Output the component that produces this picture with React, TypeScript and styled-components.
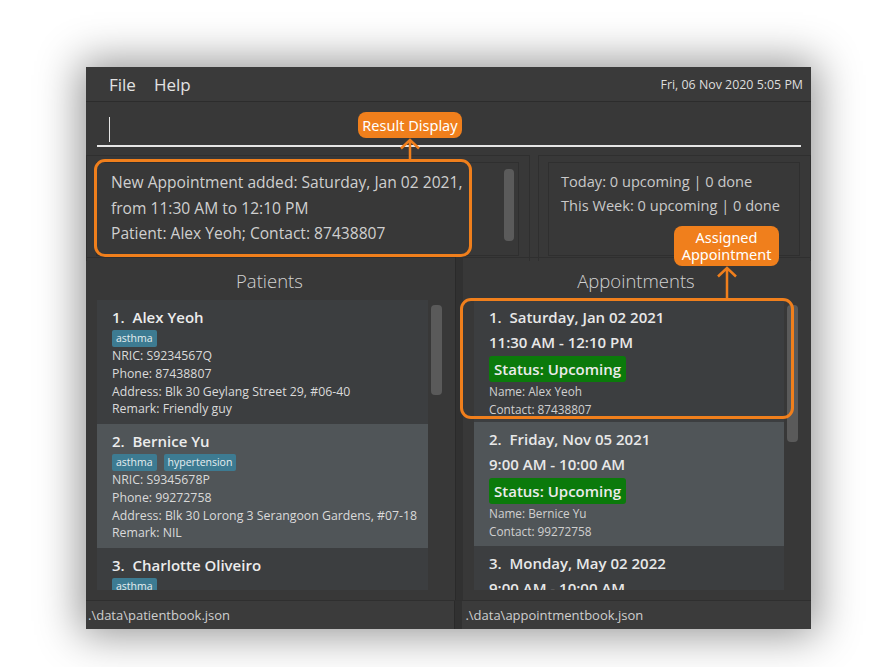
import React from "react";
import styled, { createGlobalStyle } from "styled-components";

const GlobalStyle = createGlobalStyle`
  html, body {
    margin: 0;
    padding: 0;
    background: #ffffff;
  }
  body {
    font-family: "Open Sans", "Noto Sans", sans-serif;
  }
`;

type Patient = {
  name: string;
  tags: string[];
  nric: string;
  phone: string;
  address: string;
  remark: string;
};

type Appointment = {
  date: string;
  time: string;
  name: string;
  contact: string;
};

const patients: Patient[] = [
  {
    name: "Alex Yeoh",
    tags: ["asthma"],
    nric: "S9234567Q",
    phone: "87438807",
    address: "Blk 30 Geylang Street 29, #06-40",
    remark: "Friendly guy",
  },
  {
    name: "Bernice Yu",
    tags: ["asthma", "hypertension"],
    nric: "S9345678P",
    phone: "99272758",
    address: "Blk 30 Lorong 3 Serangoon Gardens, #07-18",
    remark: "NIL",
  },
  {
    name: "Charlotte Oliveiro",
    tags: ["asthma"],
    nric: "S9456789R",
    phone: "93210283",
    address: "Blk 11 Ang Mo Kio Street 74, #11-04",
    remark: "NIL",
  },
];

const appointments: Appointment[] = [
  {
    date: "Saturday, Jan 02 2021",
    time: "11:30 AM - 12:10 PM",
    name: "Alex Yeoh",
    contact: "87438807",
  },
  {
    date: "Friday, Nov 05 2021",
    time: "9:00 AM - 10:00 AM",
    name: "Bernice Yu",
    contact: "99272758",
  },
  {
    date: "Monday, May 02 2022",
    time: "9:00 AM - 10:00 AM",
    name: "Charlotte Oliveiro",
    contact: "93210283",
  },
];

const App = () => {
  return (
    <>
      <GlobalStyle />
      <Page>
        <Window>
          <MenuBar>
            <MenuItem>File</MenuItem>
            <MenuItem>Help</MenuItem>
            <Clock>Fri, 06 Nov 2020 5:05 PM</Clock>
          </MenuBar>

          <CommandRow>
            <CommandInput>
              <Caret />
            </CommandInput>
          </CommandRow>

          <ResultRow>
            <Pane>
              <ResultBox>
                <ResultText>
                  New Appointment added: Saturday, Jan 02 2021,
                  <br />
                  from 11:30 AM to 12:10 PM
                  <br />
                  Patient: Alex Yeoh; Contact: 87438807
                </ResultText>
                <ResultScroll />
              </ResultBox>
            </Pane>
            <Pane>
              <StatsBox>
                <StatLine>Today: 0 upcoming | 0 done</StatLine>
                <StatLine>This Week: 0 upcoming | 0 done</StatLine>
              </StatsBox>
            </Pane>
          </ResultRow>

          <ListsRow>
            <ListPanel $side="left">
              <PanelTitle>Patients</PanelTitle>
              <ListArea>
                <Cards>
                  {patients.map((p, i) => (
                    <PatientCard key={p.name} $alt={i % 2 === 1}>
                      <CardTitle>
                        {i + 1}.&nbsp;&nbsp;{p.name}
                      </CardTitle>
                      <Tags>
                        {p.tags.map((t) => (
                          <Tag key={t}>{t}</Tag>
                        ))}
                      </Tags>
                      <Detail>NRIC: {p.nric}</Detail>
                      <Detail>Phone: {p.phone}</Detail>
                      <Detail>Address: {p.address}</Detail>
                      <Detail>Remark: {p.remark}</Detail>
                    </PatientCard>
                  ))}
                </Cards>
                <ScrollTrack>
                  <ScrollThumb $height={90} />
                </ScrollTrack>
              </ListArea>
            </ListPanel>
            <Divider />
            <ListPanel $side="right">
              <PanelTitle>Appointments</PanelTitle>
              <ListArea>
                <Cards>
                  {appointments.map((a, i) => (
                    <ApptCard key={a.date} $alt={i % 2 === 1}>
                      <ApptLine>
                        {i + 1}.&nbsp;&nbsp;{a.date}
                      </ApptLine>
                      <ApptLine>{a.time}</ApptLine>
                      <Status>Status: Upcoming</Status>
                      <SmallDetail>Name: {a.name}</SmallDetail>
                      <SmallDetail>Contact: {a.contact}</SmallDetail>
                    </ApptCard>
                  ))}
                </Cards>
                <ScrollTrack>
                  <ScrollThumb $height={137} />
                </ScrollTrack>
              </ListArea>
            </ListPanel>
          </ListsRow>

          <StatusRow>
            <StatusCell $side="left">.\data\patientbook.json</StatusCell>
            <Divider />
            <StatusCell $side="right">.\data\appointmentbook.json</StatusCell>
          </StatusRow>

          {/* annotations drawn over the screenshot */}
          <Outline style={{ left: 8, top: 92, width: 372, height: 92 }} />
          <Bubble style={{ left: 272, top: 45, width: 104, height: 26 }}>
            Result Display
          </Bubble>
          <Arrow style={{ left: 314, top: 72 }} width={20} height={22}>
            <path d="M10 1 V22 M1 9.5 L10 1 L19 9.5" />
          </Arrow>

          <Outline style={{ left: 374, top: 231, width: 328, height: 115 }} />
          <Bubble style={{ left: 588, top: 159, width: 105, height: 40 }}>
            Assigned
            <br />
            Appointment
          </Bubble>
          <Arrow style={{ left: 631, top: 200 }} width={20} height={32}>
            <path d="M10 1 V32 M1 9.5 L10 1 L19 9.5" />
          </Arrow>
        </Window>
      </Page>
    </>
  );
};

export default App;

const Page = styled.div`
  width: 896px;
  height: 667px;
  padding: 67px 0 0 86px;
  box-sizing: border-box;
  background: #ffffff;
  overflow: hidden;
`;

const Window = styled.div`
  position: relative;
  width: 725px;
  height: 562px;
  background: #383838;
  display: flex;
  flex-direction: column;
  box-shadow: 0 0 40px 6px rgba(0, 0, 0, 0.42);
  color: #dcdcdc;
`;

const MenuBar = styled.div`
  height: 34px;
  border-bottom: 1px solid #2c2c2c;
  display: flex;
  align-items: center;
  padding: 0 8px 0 23px;
  gap: 18px;
  background: #3a3a3a;
`;

const MenuItem = styled.span`
  font-size: 17px;
  color: #e2e2e2;
`;

const Clock = styled.span`
  margin-left: auto;
  font-size: 12.4px;
  color: #dedede;
`;

const CommandRow = styled.div`
  height: 48px;
  padding: 0 10px 3px 11px;
  box-sizing: border-box;
  display: flex;
  align-items: flex-end;
`;

const CommandInput = styled.div`
  flex: 1;
  height: 34px;
  border-bottom: 2px solid #e6e6e6;
  display: flex;
  align-items: center;
  padding-left: 12px;
  box-sizing: border-box;
`;

const Caret = styled.div`
  width: 1px;
  height: 25px;
  background: #e6e6e6;
`;

const ResultRow = styled.div`
  height: 107px;
  padding-top: 5px;
  box-sizing: border-box;
  display: grid;
  grid-template-columns: 444px 1fr;
  column-gap: 8px;
`;

const Pane = styled.div`
  border: 1px solid #2f2f2f;
  border-bottom: none;
  padding: 6px 10px 5px 9px;
  box-sizing: border-box;
  display: flex;
`;

const ResultBox = styled.div`
  flex: 1;
  border: 1px solid #2f2f2f;
  display: flex;
  justify-content: space-between;
  padding: 6px 4px 8px 14px;
`;

const ResultText = styled.div`
  font-size: 15.6px;
  line-height: 25.5px;
  color: #cfcfcf;
  margin-top: 1px;
`;

const ResultScroll = styled.div`
  width: 10px;
  height: 72px;
  border-radius: 4px;
  background: #5b5b5b;
`;

const StatsBox = styled.div`
  flex: 1;
  border: 1px solid #2f2f2f;
  padding: 6px 10px 8px 12px;
`;

const StatLine = styled.div`
  font-size: 14.6px;
  line-height: 24px;
  color: #c9c9c9;
`;

const ListsRow = styled.div`
  height: 343px;
  display: flex;
`;

const ListPanel = styled.div<{ $side: "left" | "right" }>`
  width: ${(p) => (p.$side === "left" ? "369px" : "348px")};
  border-top: 1px solid #2f2f2f;
  display: flex;
  flex-direction: column;
  padding: 0 13px 10px 11px;
  box-sizing: border-box;
`;

const Divider = styled.div`
  width: 8px;
  background: #313131;
  border-left: 1px solid #2a2a2a;
  box-sizing: border-box;
`;

const PanelTitle = styled.div`
  height: 42px;
  display: flex;
  align-items: center;
  justify-content: center;
  font-size: 18.5px;
  font-weight: 300;
  color: #d2d2d2;
  padding-top: 3px;
  box-sizing: border-box;
`;

const ListArea = styled.div`
  flex: 1;
  display: flex;
  overflow: hidden;
  gap: 3px;
`;

const Cards = styled.div`
  flex: 1;
  overflow: hidden;
  display: flex;
  flex-direction: column;
`;

const PatientCard = styled.div<{ $alt: boolean }>`
  flex-shrink: 0;
  height: 124px;
  box-sizing: border-box;
  padding: 7px 8px 4px 15px;
  background: ${(p) => (p.$alt ? "#505558" : "#3c3e40")};
`;

const CardTitle = styled.div`
  font-size: 15px;
  font-weight: 600;
  line-height: 21px;
  color: #ececec;
`;

const Tags = styled.div`
  display: flex;
  gap: 7px;
  margin: 2px 0 0;
`;

const Tag = styled.span`
  font-size: 10.5px;
  line-height: 17px;
  padding: 0 4px;
  border-radius: 2px;
  background: #3d7b92;
  color: #e6eef0;
`;

const Detail = styled.div`
  font-size: 12.3px;
  line-height: 17.8px;
  color: #dadada;
  white-space: nowrap;
`;

const ApptCard = styled.div<{ $alt: boolean }>`
  flex-shrink: 0;
  height: ${(p) => (p.$alt ? "124px" : "122px")};
  box-sizing: border-box;
  padding: 5px 8px 4px 15px;
  background: ${(p) => (p.$alt ? "#505558" : "#3c3e40")};
`;

const ApptLine = styled.div`
  font-size: 15px;
  font-weight: 600;
  line-height: 25px;
  color: #e8e8e8;
`;

const Status = styled.div`
  display: inline-block;
  margin-top: 1px;
  padding: 0 5px;
  font-size: 15px;
  font-weight: 600;
  line-height: 26px;
  border-radius: 3px;
  background: #0b7a0b;
  color: #ececec;
`;

const SmallDetail = styled.div`
  font-size: 11.8px;
  line-height: 18px;
  color: #d0d0d0;
`;

const ScrollTrack = styled.div`
  width: 11px;
  padding-top: 5px;
`;

const ScrollThumb = styled.div<{ $height: number }>`
  width: 11px;
  height: ${(p) => p.$height}px;
  border-radius: 4px;
  background: #5a5a5a;
`;

const StatusRow = styled.div`
  height: 29px;
  display: flex;
  border-top: 1px solid #2f2f2f;
  box-sizing: border-box;
`;

const StatusCell = styled.div<{ $side: "left" | "right" }>`
  width: ${(p) => (p.$side === "left" ? "369px" : "348px")};
  display: flex;
  align-items: center;
  padding-left: ${(p) => (p.$side === "left" ? "2px" : "3px")};
  font-size: 13px;
  color: #cfcfcf;
  background: #3b3b3b;
`;

const Outline = styled.div`
  position: absolute;
  border: 3px solid #f07f1c;
  border-radius: 11px;
  pointer-events: none;
`;

const Bubble = styled.div`
  position: absolute;
  box-sizing: border-box;
  display: flex;
  align-items: center;
  justify-content: center;
  text-align: center;
  background: #f07f1c;
  border-radius: 8px;
  color: #ffffff;
  font-family: "Noto Sans", "Open Sans", sans-serif;
  font-size: 14.5px;
  line-height: 17px;
`;

const Arrow = styled.svg`
  position: absolute;
  fill: none;
  stroke: #f07f1c;
  stroke-width: 2.5;
  overflow: visible;
`;
